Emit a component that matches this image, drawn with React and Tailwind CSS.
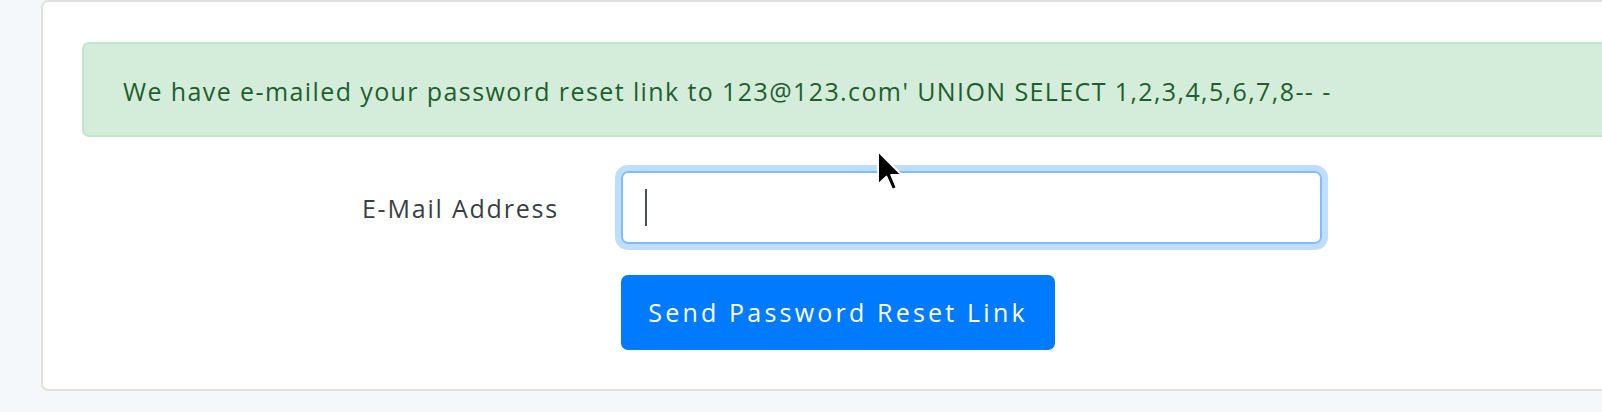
import React from "react";

export default function App() {
  return (
    <div
      className="relative w-[1602px] h-[412px] overflow-hidden bg-[#f5f8fa] pl-[41px]"
      style={{ fontFamily: "'Open Sans', Lato, sans-serif" }}
    >
      <div className="w-[1620px] h-[391px] bg-white border-2 border-[#e0e0e0] rounded-[7px] pl-[39px] pt-[40px]">
        <div className="h-[95px] bg-[#d4edda] border-2 border-[#c3e6cb] rounded-[7px] flex items-center pl-[39px] pt-[4px] text-[#1e5e2e] text-[25px] tracking-[1.4px] whitespace-nowrap">
          We have e-mailed your password reset link to 123@123.com' UNION SELECT 1,2,3,4,5,6,7,8-- -
        </div>
        <div className="mt-[34px] h-[73px] flex items-center">
          <label className="w-[477px] text-right text-[25px] tracking-[1.8px] text-[#3a3f44] whitespace-nowrap pt-[2px]">
            E-Mail Address
          </label>
          <div className="ml-[62px] w-[701px] h-[73px] border-2 border-[#80bdff] rounded-[7px] shadow-[0_0_0_6px_rgba(0,123,255,0.25)] flex items-center pl-[22px]">
            <span className="block w-[2px] h-[37px] bg-[#495057]" />
          </div>
        </div>
        <div className="mt-[31px] ml-[539px]">
          <button className="w-[434px] h-[75px] bg-[#007bff] rounded-[7px] text-white text-[25px] tracking-[3.2px] whitespace-nowrap">
            Send Password Reset Link
          </button>
        </div>
      </div>
      <svg
        className="absolute left-[876px] top-[149px]"
        width="27"
        height="44"
        viewBox="-1 -1 13 21"
      >
        <path
          d="M0 0 L0 16 L4 12.2 L6.8 18.5 L9 17.6 L6.3 11.4 L11.3 11.4 Z"
          fill="#000"
          stroke="#fff"
          strokeWidth="0.9"
          strokeLinejoin="round"
        />
      </svg>
    </div>
  );
}
